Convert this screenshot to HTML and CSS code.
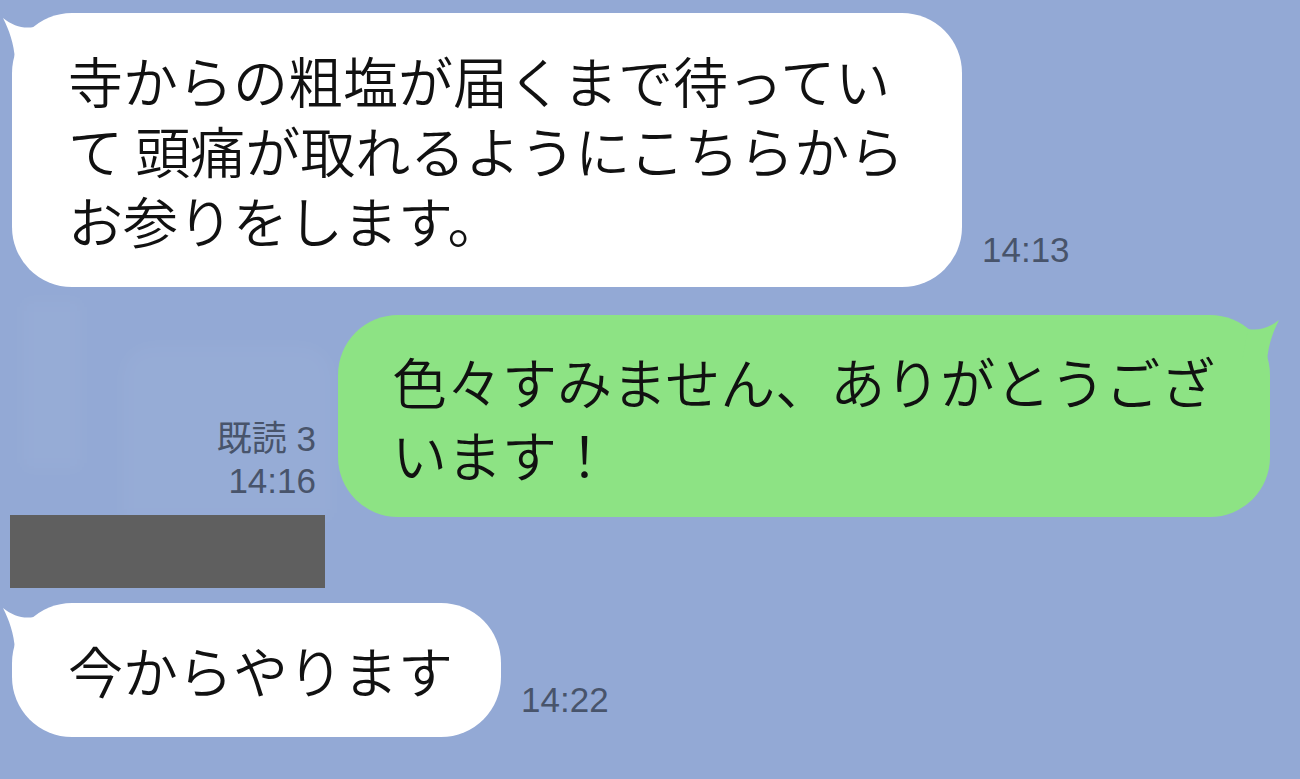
FILE: index.html
```html
<!DOCTYPE html>
<html lang="ja">
<head>
<meta charset="utf-8">
<title>LINE</title>
<link rel="stylesheet" href="styles.css">
</head>
<body>
<div class="chat">
  <div class="ghost ghost-a"></div>
  <div class="ghost ghost-b"></div>

  <div class="row row-in row-first">
    <div class="bubble bubble-white bubble-wide">
      <svg class="tail tail-left" viewBox="0 0 50 60" width="50" height="60"><path d="M3 5 C13 13 23 16 34 14 L40 47 L15 47 C14 30 9 17 3 5 Z"/></svg>
      <p class="msg">寺からの粗塩が届くまで待っていて 頭痛が取れるようにこちらからお参りをします。</p>
    </div>
    <span class="time">14:13</span>
  </div>

  <div class="row row-out">
    <div class="meta">
      <span>既読 3</span>
      <span>14:16</span>
    </div>
    <div class="bubble bubble-green">
      <svg class="tail tail-right" viewBox="0 0 50 60" width="50" height="60"><path d="M3 5 C13 13 23 16 34 14 L40 47 L15 47 C14 30 9 17 3 5 Z"/></svg>
      <p class="msg msg-green">色々すみません、ありがとうございます！</p>
    </div>
  </div>

  <div class="redact"></div>

  <div class="row row-in row-last">
    <div class="bubble bubble-white bubble-short">
      <svg class="tail tail-left" viewBox="0 0 50 60" width="50" height="60"><path d="M3 5 C13 13 23 16 34 14 L40 47 L15 47 C14 30 9 17 3 5 Z"/></svg>
      <p class="msg">今からやります</p>
    </div>
    <span class="time">14:22</span>
  </div>
</div>
</body>
</html>
```

FILE: styles.css
```css
html, body {
  margin: 0;
  padding: 0;
}

body {
  width: 1300px;
  height: 779px;
  overflow: hidden;
  background: #93a9d5;
  font-family: "Noto Sans CJK JP", sans-serif;
}

.chat {
  position: relative;
  display: flex;
  flex-direction: column;
  height: 779px;
}

.ghost {
  position: absolute;
  background: rgba(255, 255, 255, 0.035);
  filter: blur(8px);
  pointer-events: none;
}

.ghost-a {
  left: 22px;
  top: 300px;
  width: 60px;
  height: 170px;
}

.ghost-b {
  left: 122px;
  top: 345px;
  width: 210px;
  height: 175px;
  border-radius: 30px 30px 0 0;
}

.row {
  display: flex;
  align-items: flex-end;
  position: relative;
}

.row-in {
  padding-left: 12px;
}

.row-first {
  margin-top: 13px;
}

.row-out {
  justify-content: flex-end;
  padding-right: 30px;
  margin-top: 28px;
}

.row-last {
  margin-top: 15px;
}

.bubble {
  position: relative;
  box-sizing: border-box;
  border-radius: 60px;
}

.bubble-white {
  background: #ffffff;
  padding: 31px 54px 33px 56px;
  fill: #ffffff;
}

.bubble-wide {
  width: 950px;
}

.bubble-short {
  padding-right: 48px;
}

.bubble-green {
  background: #8de384;
  fill: #8de384;
  width: 932px;
  padding: 29px 48px 27px 54px;
}

.tail {
  position: absolute;
  top: 0;
  display: block;
}

.tail-left {
  left: -12px;
}

.tail-right {
  right: -12px;
  transform: scaleX(-1);
}

.msg {
  position: relative;
  margin: 0;
  font-size: 55px;
  font-weight: 350;
  line-height: 70px;
  color: #111111;
}

.msg-green {
  line-height: 73px;
}

.time {
  font-family: "Liberation Sans", "Noto Sans CJK JP", sans-serif;
  font-size: 35px;
  line-height: 42px;
  color: #48546b;
  margin-left: 20px;
  margin-bottom: 16px;
}

.meta {
  display: flex;
  flex-direction: column;
  align-items: flex-end;
  font-family: "Liberation Sans", "Noto Sans CJK JP", sans-serif;
  font-size: 35px;
  line-height: 42px;
  color: #48546b;
  margin-right: 22px;
  margin-bottom: 15px;
}

.redact {
  width: 315px;
  height: 73px;
  margin-top: -2px;
  margin-left: 10px;
  background: #5f5f5f;
  position: relative;
}
```
